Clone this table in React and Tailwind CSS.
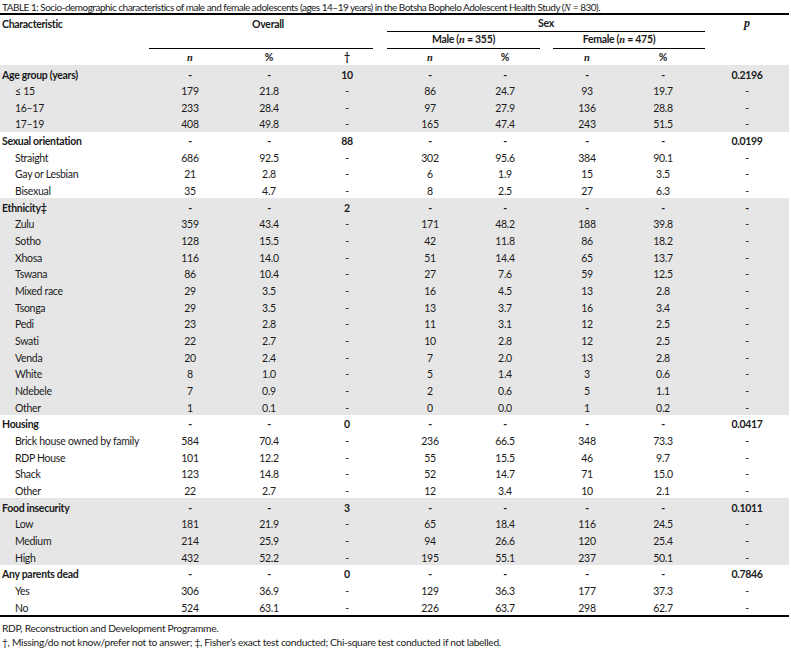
import React from 'react'

const cols = 'grid grid-cols-[149px_82px_76px_80px_3px_80px_70px_7px_80px_72px_6px_84px]'

const groups = [
  { label: 'Age group (years)', missing: '10', p: '0.2196', gray: true, rows: [
    ['≤ 15', '179', '21.8', '86', '24.7', '93', '19.7'],
    ['16–17', '233', '28.4', '97', '27.9', '136', '28.8'],
    ['17–19', '408', '49.8', '165', '47.4', '243', '51.5'],
  ]},
  { label: 'Sexual orientation', missing: '88', p: '0.0199', rows: [
    ['Straight', '686', '92.5', '302', '95.6', '384', '90.1'],
    ['Gay or Lesbian', '21', '2.8', '6', '1.9', '15', '3.5'],
    ['Bisexual', '35', '4.7', '8', '2.5', '27', '6.3'],
  ]},
  { label: 'Ethnicity‡', missing: '2', p: '-', gray: true, rows: [
    ['Zulu', '359', '43.4', '171', '48.2', '188', '39.8'],
    ['Sotho', '128', '15.5', '42', '11.8', '86', '18.2'],
    ['Xhosa', '116', '14.0', '51', '14.4', '65', '13.7'],
    ['Tswana', '86', '10.4', '27', '7.6', '59', '12.5'],
    ['Mixed race', '29', '3.5', '16', '4.5', '13', '2.8'],
    ['Tsonga', '29', '3.5', '13', '3.7', '16', '3.4'],
    ['Pedi', '23', '2.8', '11', '3.1', '12', '2.5'],
    ['Swati', '22', '2.7', '10', '2.8', '12', '2.5'],
    ['Venda', '20', '2.4', '7', '2.0', '13', '2.8'],
    ['White', '8', '1.0', '5', '1.4', '3', '0.6'],
    ['Ndebele', '7', '0.9', '2', '0.6', '5', '1.1'],
    ['Other', '1', '0.1', '0', '0.0', '1', '0.2'],
  ]},
  { label: 'Housing', missing: '0', p: '0.0417', rows: [
    ['Brick house owned by family', '584', '70.4', '236', '66.5', '348', '73.3'],
    ['RDP House', '101', '12.2', '55', '15.5', '46', '9.7'],
    ['Shack', '123', '14.8', '52', '14.7', '71', '15.0'],
    ['Other', '22', '2.7', '12', '3.4', '10', '2.1'],
  ]},
  { label: 'Food insecurity', missing: '3', p: '0.1011', gray: true, rows: [
    ['Low', '181', '21.9', '65', '18.4', '116', '24.5'],
    ['Medium', '214', '25.9', '94', '26.6', '120', '25.4'],
    ['High', '432', '52.2', '195', '55.1', '237', '50.1'],
  ]},
  { label: 'Any parents dead', missing: '0', p: '0.7846', rows: [
    ['Yes', '306', '36.9', '129', '36.3', '177', '37.3'],
    ['No', '524', '63.1', '226', '63.7', '298', '62.7'],
  ]},
]

const serif = "font-['Liberation_Serif',serif] italic font-bold tracking-normal"

function Row({ cells, bold, gray, indent }) {
  const [label, oN, oP, dag, mN, mP, fN, fP, p] = cells
  return (
    <div className={`${cols} h-[16.67px] pt-[3.5px] whitespace-nowrap ${gray ? 'bg-[#e6e6e6]' : ''} ${bold ? 'font-bold' : ''}`}>
      <div className={indent ? 'pl-[15px]' : 'pl-[2px]'}>{label}</div>
      <div className="text-center">{oN}</div>
      <div className="text-center">{oP}</div>
      <div className="text-center">{dag}</div>
      <div />
      <div className="text-center">{mN}</div>
      <div className="text-center">{mP}</div>
      <div />
      <div className="text-center">{fN}</div>
      <div className="text-center">{fP}</div>
      <div />
      <div className="text-center">{p}</div>
    </div>
  )
}

export default function App() {
  return (
    <div className="w-[791px] bg-white text-[#1a1a1a] font-['Lato',sans-serif] text-[10.5px] tracking-[-0.3px] leading-[13px]">
      <div className="pl-[2px] h-[13px] pt-[1px] whitespace-nowrap text-[10px] tracking-[-0.5px]">
        TABLE 1: Socio-demographic characteristics of male and female adolescents (ages 14–19 years) in the Botsha Bophelo Adolescent Health Study (<span className="font-['Liberation_Serif',serif] italic tracking-normal">N</span> = 830).
      </div>

      <div className="w-[789px] border-t-2 border-black">
        <div className={`${cols} grid-rows-[17px_17px_16px]`}>
          <div className="row-start-1 col-start-1 pl-[2px] pt-[3px] font-bold">Characteristic</div>
          <div className="row-start-1 row-span-2 col-start-2 col-span-3 flex flex-col">
            <div className="pt-[3px] text-center font-bold flex-1">Overall</div>
            <div className="mr-[14px] border-b border-black" />
          </div>
          <div className="row-start-1 col-start-5 col-span-7 border-b border-black text-center pt-[2px] font-bold">Sex</div>
          <div className={`row-start-1 col-start-12 text-center pt-[2px] ${serif} text-[12px]`}>p</div>
          <div className="row-start-2 col-start-5 col-span-3 border-b border-black text-center pt-[1px] font-bold">
            Male (<span className={serif}>n</span> = 355)
          </div>
          <div className="row-start-2 col-start-9 col-span-3 ml-[6px] border-b border-black pr-[20px] text-center pt-[1px] font-bold">
            Female (<span className={serif}>n</span> = 475)
          </div>
          <div className={`row-start-3 col-start-2 text-center pt-[2px] ${serif}`}>n</div>
          <div className="row-start-3 col-start-3 text-center pt-[2px] font-bold">%</div>
          <div className="row-start-3 col-start-4 text-center pt-[2px] font-bold">†</div>
          <div className={`row-start-3 col-start-6 text-center pt-[2px] ${serif}`}>n</div>
          <div className="row-start-3 col-start-7 text-center pt-[2px] font-bold">%</div>
          <div className={`row-start-3 col-start-9 text-center pt-[2px] ${serif}`}>n</div>
          <div className="row-start-3 col-start-10 text-center pt-[2px] font-bold">%</div>
        </div>

        <div className="border-b-2 border-black">
          {groups.map(g => (
            <div key={g.label}>
              <Row bold gray={g.gray} cells={[g.label, '-', '-', g.missing, '-', '-', '-', '-', g.p]} />
              {g.rows.map(r => (
                <Row key={r[0]} indent gray={g.gray}
                  cells={[r[0], r[1], r[2], '-', r[3], r[4], r[5], r[6], '-']} />
              ))}
            </div>
          ))}
        </div>
      </div>

      <div className="mt-[4px] pl-[2px] text-[10.2px] leading-[14px]">
        <p>RDP, Reconstruction and Development Programme.</p>
        <p>†, Missing/do not know/prefer not to answer; ‡, Fisher’s exact test conducted; Chi-square test conducted if not labelled.</p>
      </div>
    </div>
  )
}
